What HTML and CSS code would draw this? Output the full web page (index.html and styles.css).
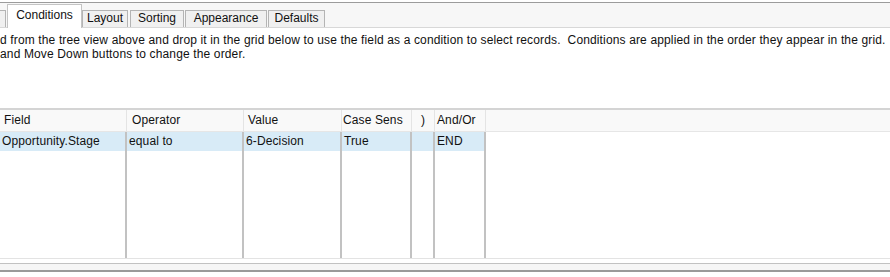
FILE: index.html
```html
<!DOCTYPE html>
<html>
<head>
<meta charset="utf-8">
<link rel="stylesheet" href="styles.css">
</head>
<body>
<div class="tabstrip">
  <div class="tab tab-partial"></div>
  <div class="tab tab-active">Conditions</div>
  <div class="tab tab-layout">Layout</div>
  <div class="tab tab-sorting">Sorting</div>
  <div class="tab tab-appearance">Appearance</div>
  <div class="tab tab-defaults">Defaults</div>
</div>
<div class="desc">
  <p>d from the tree view above and drop it in the grid below to use the field as a condition to select records.&nbsp; Conditions are applied in the order they appear in the grid.</p>
  <p>and Move Down buttons to change the order.</p>
</div>
<div class="grid">
  <div class="hcell h-field">Field</div>
  <div class="hcell h-op">Operator</div>
  <div class="hcell h-val">Value</div>
  <div class="hcell h-case">Case Sens</div>
  <div class="hcell h-paren">)</div>
  <div class="hcell h-andor">And/Or</div>
  <div class="hcell h-rest"></div>

  <div class="cell sel">Opportunity.Stage</div>
  <div class="cell sel">equal to</div>
  <div class="cell sel">6-Decision</div>
  <div class="cell sel">True</div>
  <div class="cell sel"></div>
  <div class="cell sel">END</div>
  <div class="cell rest"></div>

  <div class="cell fill"></div>
  <div class="cell fill"></div>
  <div class="cell fill"></div>
  <div class="cell fill"></div>
  <div class="cell fill"></div>
  <div class="cell fill"></div>
  <div class="cell rest fill"></div>
</div>
<div class="footer">
  <div class="foot-line1"></div>
  <div class="foot-band"></div>
  <div class="foot-line2"></div>
</div>
</body>
</html>
```
FILE: styles.css
```css
html, body {
  margin: 0;
  padding: 0;
  background: #ffffff;
  width: 890px;
  height: 277px;
  overflow: hidden;
  font-family: "Liberation Sans", Arial, sans-serif;
  font-size: 12px;
  color: #111;
}

.tabstrip {
  margin-top: 2px;
  border-top: 1px solid #9c9c9c;
  border-bottom: 1px solid #d8d8d8;
  background: #f7f7f7;
  height: 24px;
  display: flex;
  align-items: flex-end;
}

.tab {
  box-sizing: border-box;
  height: 17px;
  border: 1px solid #b4b4b4;
  border-bottom: none;
  background: #f0f0f0;
  line-height: 15px;
  text-align: center;
  white-space: nowrap;
  overflow: hidden;
  color: #111;
}

.tab-partial {
  width: 6px;
  border-left: none;
}

.tab-active {
  width: 75px;
  height: 24px;
  margin-left: 1px;
  margin-bottom: -1px;
  padding-top: 3px;
  background: #ffffff;
  border-color: #c4c4c4;
  position: relative;
}

.tab-layout { width: 46px; margin-left: 0; }
.tab-sorting { width: 54px; margin-left: 2px; }
.tab-appearance { width: 82px; margin-left: 1px; }
.tab-defaults { width: 57px; margin-left: 1px; }

.desc {
  margin-top: 5px;
  height: 75px;
  line-height: 14px;
  letter-spacing: 0.14px;
}

.desc p {
  margin: 0;
  white-space: nowrap;
}

.grid {
  display: grid;
  grid-template-columns: 127px 117px 98px 70px 23px 51px 1fr;
  grid-template-rows: 22px 19px 107px;
  border-top: 2px solid #d4d4d4;
  border-bottom: 1px solid #e3e3e3;
  letter-spacing: 0.12px;
}

.hcell {
  box-sizing: border-box;
  background: #f9f9f9;
  border-right: 1px solid #e4e4e4;
  border-bottom: 1px solid #e6e6e6;
  line-height: 21px;
  padding-left: 4px;
  white-space: nowrap;
  overflow: hidden;
}

.h-op { padding-left: 5px; }
.h-case { padding-left: 1px; }
.h-paren { padding-left: 0; text-align: center; }
.h-andor { padding-left: 2px; }
.h-rest { border-right: none; }

.cell {
  box-sizing: border-box;
  border-right: 2px solid #c2c2c2;
  line-height: 19px;
  padding-left: 2px;
  white-space: nowrap;
  overflow: hidden;
}

.cell.sel {
  background: #d8ebf7;
}

.cell.rest {
  border-right: none;
  background: #ffffff;
}

.footer {
  height: 18px;
}

.foot-line1 {
  height: 4px;
  background: #ffffff;
  border-bottom: 1px solid #c2c2c2;
}

.foot-band {
  height: 6px;
  background: #f6f6f6;
}

.foot-line2 {
  height: 2px;
  background: #9a9a9a;
}
```
